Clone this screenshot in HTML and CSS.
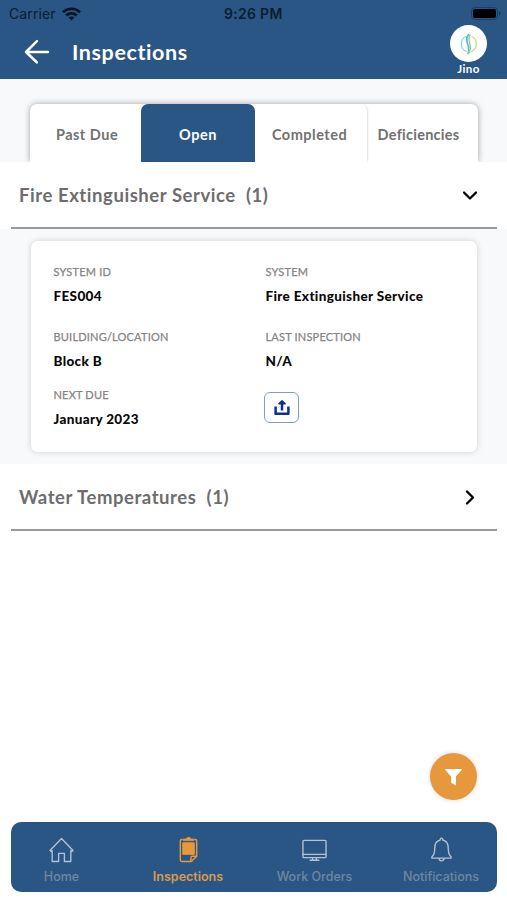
FILE: index.html
```html
<!DOCTYPE html>
<html lang="en">
<head>
<meta charset="utf-8">
<title>Inspections</title>
<link rel="stylesheet" href="styles.css">
</head>
<body>
<div class="app">
  <header class="header">
    <div class="status">
      <div class="carrier"><span>Carrier</span>
        <svg width="19" height="14" viewBox="0 0 19 14" fill="none" stroke="#071521" stroke-width="2.7"><path d="M1 5.2C5.7.6 13.3.6 18 5.2M4.2 8.4c3-2.800 7.600-2.800 10.600 0"/><path d="M9.500 13.400 6.600 10.500c1.600-1.500 4.200-1.500 5.800 0z" fill="#071521" stroke="none"/></svg>
      </div>
      <time class="clock">9:26 PM</time>
      <svg class="battery" width="31" height="14" viewBox="0 0 31 14"><rect x=".5" y=".5" width="26" height="12" rx="3.5" fill="none" stroke="#1b3f63"/><rect x="2" y="2" width="23" height="9" rx="2" fill="#000"/><path d="M28 4.500c2 .5 2 3.500 0 4z" fill="#173a5c"/></svg>
    </div>
    <div class="titlebar">
      <svg class="back" width="26" height="26" viewBox="0 0 26 26" fill="none" stroke="#fff" stroke-width="2.500" stroke-linecap="round" stroke-linejoin="round"><path d="M24 13H2M13 2.200 2 13l11 10.500"/></svg>
      <h1>Inspections</h1>
      <div class="user">
        <div class="avatar">
          <svg width="20" height="22" viewBox="0 0 20 22" fill="none" stroke-linecap="round"><path d="M7 3.500C1 6 .5 15 7 18.500" stroke="#8bd3e6" stroke-width="1.300"/><path d="M13 3.500c6 3 6 12-1 15.500" stroke="#c5dc83" stroke-width="1.300"/><path d="M9.500 1.500C4 8 12.500 13 9 20.500" stroke="#54bdd0" stroke-width="1.600"/><path d="M11 2c-4 6 4 11-1.500 18.500" stroke="#8bcb9e" stroke-width="1.400"/></svg>
        </div>
        <span>Jino</span>
      </div>
    </div>
  </header>

  <div class="tabs-area">
    <nav class="tabs">
      <a class="tab past">Past Due</a>
      <a class="tab active">Open</a>
      <a class="tab completed">Completed</a>
      <a class="tab deficiencies">Deficiencies</a>
    </nav>
  </div>

  <main>
    <section>
      <div class="group-head">
        <h2>Fire Extinguisher Service&nbsp; (1)</h2>
        <svg width="16" height="16" viewBox="0 0 16 16" fill="none" stroke="#000" stroke-width="2.300" stroke-linecap="round" stroke-linejoin="round"><path d="m2 5.500 6 6 6-6"/></svg>
      </div>
      <div class="group-body">
        <div class="card">
          <div class="field"><span class="label">SYSTEM ID</span><b>FES004</b></div>
          <div class="field"><span class="label">SYSTEM</span><b>Fire Extinguisher Service</b></div>
          <div class="field"><span class="label">BUILDING/LOCATION</span><b>Block B</b></div>
          <div class="field"><span class="label">LAST INSPECTION</span><b>N/A</b></div>
          <div class="field"><span class="label">NEXT DUE</span><b>January 2023</b></div>
          <button class="upload" aria-label="Upload">
            <svg width="16" height="17" viewBox="0 0 16 17" fill="none" stroke="#0b2f92" stroke-width="2.500" stroke-linejoin="round"><path d="M1.600 7.500v7.300h12.800V7.500M8 11.500V3"/><path d="M4.800 4.800 8 1.600l3.200 3.200z" fill="#0b2f92" stroke-width="1.300"/></svg>
          </button>
        </div>
      </div>
    </section>
    <section>
      <div class="group-head">
        <h2>Water Temperatures&nbsp; (1)</h2>
        <svg width="16" height="16" viewBox="0 0 16 16" fill="none" stroke="#000" stroke-width="2.300" stroke-linecap="round" stroke-linejoin="round"><path d="m5 2.500 6 6-6 6"/></svg>
      </div>
    </section>
  </main>

  <button class="fab" aria-label="Filter">
    <svg width="17" height="17" viewBox="0 0 17 17" fill="#fff"><path d="M.6 0h15.800q.8.300.3 1l-5.800 6.500v8.200q-.2.900-1 .4L6.700 14q-.6-.4-.6-1.100V7.500L.3 1Q-.1.200.6 0z"/></svg>
  </button>

  <nav class="bottom">
    <a class="item">
      <svg width="26" height="28" viewBox="0 0 26 28" fill="none" stroke="#b4c3d3" stroke-width="1.400" stroke-linejoin="round" stroke-linecap="round"><path d="M1 14.500 13 2l12 12.500-1.300 1-1-.9V26h-6.700v-8.500H10V26H3.300V14.600l-1 .9z"/></svg>
      <span>Home</span>
    </a>
    <a class="item current">
      <svg width="26" height="28" viewBox="0 0 26 28" fill="none" stroke="#e8983c" stroke-width="1.500" stroke-linejoin="round"><path d="M7 3H6Q4.500 3 4.500 4.500v20Q4.500 26 6 26h10l5.500-5.500v-16Q21.500 3 20 3h-1"/><path d="M7.500 4.200V2.500h3Q11 .8 13 .8t2.500 1.700h3v1.700z" fill="#e8983c" stroke-width=".8"/><path d="M7 6.500h12v12H7z" fill="#e8983c" stroke-width="1"/><path d="M15.500 26v-4q0-1.500 1.500-1.500h4.500"/></svg>
      <span>Inspections</span>
    </a>
    <a class="item">
      <svg width="26" height="28" viewBox="0 0 26 28" fill="none" stroke="#b4c3d3" stroke-width="1.400" stroke-linejoin="round" stroke-linecap="round"><rect x="1" y="4" width="24" height="18" rx="1"/><path d="M1 18.500h24M11 22v2.700M15 22v2.700M8.500 24.700h9"/></svg>
      <span>Work Orders</span>
    </a>
    <a class="item">
      <svg width="26" height="28" viewBox="0 0 26 28" fill="none" stroke="#b4c3d3" stroke-width="1.400" stroke-linejoin="round" stroke-linecap="round"><path d="M11.500 3.800c0-2.800 3-2.800 3 0 4 1 5.500 4.200 5.500 8 0 5.500.7 7.200 3 9.200v1.500H3V21c2.300-2 3-3.700 3-9.200 0-3.800 1.500-7 5.500-8z"/><path d="M10.500 23c.3 3 4.700 3 5 0"/></svg>
      <span>Notifications</span>
    </a>
  </nav>
</div>
</body>
</html>
```
FILE: styles.css
```css
* { box-sizing: border-box; }
body {
  margin: 0;
  background: #fff;
  font-family: Lato, "Liberation Sans", sans-serif;
}
h1, h2 { margin: 0; font-weight: 700; }
svg { display: block; flex: none; }
button { padding: 0; }
.app {
  width: 507px;
  height: 900px;
  display: flex;
  flex-direction: column;
  overflow: hidden;
}
.header { height: 79px; background: #295684; }
.status {
  height: 27px;
  display: grid;
  grid-template-columns: 215px auto 1fr;
  align-items: center;
  padding: 1px 5px 0 9px;
  font: 14px/18px Inter, sans-serif;
  color: #0b1d2e;
}
.carrier { display: flex; align-items: center; gap: 6px; letter-spacing: .1px; }
.clock { font-weight: 600; letter-spacing: .3px; }
.battery { justify-self: end; }
.titlebar {
  height: 52px;
  display: flex;
  align-items: center;
  padding: 0 18px 0 24px;
  color: #fff;
}
.titlebar h1 {
  font-size: 21.5px;
  line-height: 26px;
  letter-spacing: .6px;
  margin-left: 22px;
  flex: 1;
  padding-bottom: 2px;
}
.back { margin-bottom: 2px; }
.user {
  width: 41px;
  display: flex;
  flex-direction: column;
  align-items: center;
  margin-bottom: 5px;
  font-size: 11.5px;
  font-weight: 700;
  line-height: 14px;
  letter-spacing: .4px;
}
.avatar {
  width: 37px;
  height: 37px;
  border-radius: 50%;
  background: #fff;
  display: grid;
  place-items: center;
}
.tabs-area {
  height: 83px;
  background: #f8f9fb;
  padding: 25px 29px 0 30px;
  overflow: hidden;
}
.tabs {
  height: 58px;
  display: grid;
  grid-template-columns: 111px 114px 112px 111px;
  background: #fff;
  border-radius: 7px 7px 0 0;
  box-shadow: 0 0 6px rgba(0, 0, 0, .35);
}
.tab {
  display: flex;
  align-items: center;
  justify-content: center;
  padding-top: 3px;
  border-radius: 7px 7px 0 0;
  font-size: 14.5px;
  letter-spacing: .5px;
  font-weight: 700;
  color: #717171;
}
.tab.active { background: #295684; color: #fff; }
.completed { box-shadow: 2px 0 2px -1px rgba(0, 0, 0, .13); padding-right: 3px; }
.deficiencies { padding-right: 8px; letter-spacing: .25px; }
.past { padding-left: 3px; }
.group-head {
  height: 67px;
  margin: 0 10px 0 11px;
  padding: 0 19px 0 8px;
  display: flex;
  align-items: center;
  justify-content: space-between;
  border-bottom: 2px solid #999;
}
.group-head h2 {
  font-size: 18.5px;
  line-height: 24px;
  letter-spacing: .56px;
  color: #6d6d6d;
  padding-top: 1px;
}
.group-body { height: 235px; background: #f8f9fb; padding: 12px 30px 0 31px; }
.card {
  height: 211px;
  border-radius: 7px;
  background: #fff;
  box-shadow: 0 0 6px rgba(0, 0, 0, .17);
  display: grid;
  grid-template-columns: 212px 1fr;
  grid-template-rows: 65px 58px 50px;
  padding: 24px 22px 0;
}
.field { display: flex; flex-direction: column; padding-left: .5px; }
.label {
  font-size: 11px;
  line-height: 14px;
  letter-spacing: .2px;
  color: #858585;
  -webkit-text-stroke: .25px #858585;
}
.field b {
  font-size: 13.5px;
  line-height: 18px;
  letter-spacing: .35px;
  font-weight: 900;
  margin-top: 8px;
  color: #090909;
}
.upload {
  width: 35px;
  height: 31px;
  margin: 4px 0 0 -1px;
  background: #fff;
  border: 1px solid #7f9bd2;
  border-radius: 6px;
  display: grid;
  place-items: center;
}
main { flex: 1; }
.fab {
  align-self: flex-end;
  width: 47px;
  height: 47px;
  margin: 0 30px 22px 0;
  border: 0;
  border-radius: 50%;
  background: #e8983c;
  box-shadow: 0 0 5px rgba(0, 0, 0, .16);
  display: grid;
  place-items: center;
}
.fab svg { margin-top: 2px; }
.bottom {
  height: 70px;
  flex: none;
  margin: 0 10px 8px 11px;
  border-radius: 10px;
  background: #295684;
  display: grid;
  grid-template-columns: 101px 152px 101px 132px;
}
.item {
  display: flex;
  flex-direction: column;
  align-items: center;
  padding-top: 14px;
  color: #71879f;
  font: 500 12.5px/16px Inter, sans-serif;
}
.item svg { width: 25px; }
.item span { margin-top: 5px; white-space: nowrap; }
.item:nth-child(4) { padding-left: 20px; }
.current { color: #d99a50; font-weight: 600; }
```
